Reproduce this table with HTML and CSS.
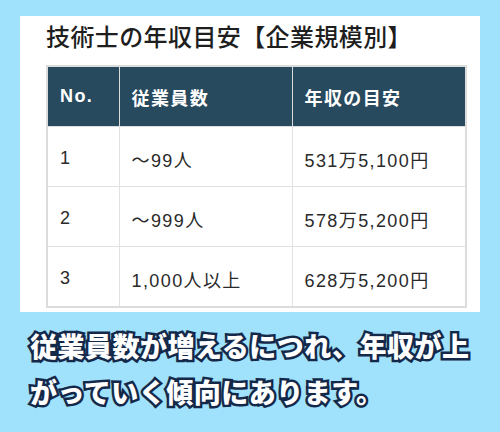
FILE: index.html
```html
<!DOCTYPE html>
<html lang="ja">
<head>
<meta charset="utf-8">
<link rel="stylesheet" href="styles.css">
</head>
<body>
<div class="panel">
  <h1 class="title">技術士の年収目安【企業規模別】</h1>
  <table class="tbl">
    <colgroup>
      <col class="c1"><col class="c2"><col class="c3">
    </colgroup>
    <thead>
      <tr><th>No.</th><th>従業員数</th><th>年収の目安</th></tr>
    </thead>
    <tbody>
      <tr><td>1</td><td>～99人</td><td>531万5,100円</td></tr>
      <tr><td>2</td><td>～999人</td><td>578万5,200円</td></tr>
      <tr><td>3</td><td>1,000人以上</td><td>628万5,200円</td></tr>
    </tbody>
  </table>
</div>
<p class="caption">従業員数が増えるにつれ、年収が上<br>がっていく傾向にあります。</p>
</body>
</html>
```
FILE: styles.css
```css
html, body {
  margin: 0;
  padding: 0;
}
body {
  width: 500px;
  height: 432px;
  background: #a0e1fb;
  overflow: hidden;
  font-family: "Liberation Sans", "Noto Sans CJK JP", sans-serif;
}
.panel {
  margin: 16px 0 0 20px;
  width: 460px;
  height: 296px;
  box-sizing: border-box;
  background: #ffffff;
  padding: 0 15px 0 26px;
}
.title {
  margin: 0;
  height: 49px;
  line-height: 39px;
  font-size: 24px;
  font-weight: 500;
  letter-spacing: 0.4px;
  color: #1e1e1e;
  font-family: "Noto Sans CJK JP", sans-serif;
  white-space: nowrap;
}
.tbl {
  border-collapse: collapse;
  width: 419px;
  table-layout: fixed;
  border: 2px solid #dcdcdc;
}
.c1 { width: 72px; }
.c2 { width: 173px; }
.c3 { width: 174px; }
.tbl th, .tbl td {
  height: 59px;
  padding: 0 0 0 12px;
  text-align: left;
  font-size: 18px;
  letter-spacing: 1.4px;
  border: 1px solid #e2e2e2;
  white-space: nowrap;
}
.tbl th {
  background: #284a5e;
  color: #fff;
  font-weight: 700;
  font-size: 18px;
  border-color: #dcdcdc;
}
.tbl td {
  color: #2a2a2a;
  height: 55px;
  padding-top: 4px;
}
.caption {
  margin: 11px 0 0 30px;
  font-family: "Noto Sans CJK JP", sans-serif;
  font-weight: 900;
  font-size: 27px;
  line-height: 46px;
  letter-spacing: 0.5px;
  color: #fff;
  -webkit-text-stroke: 5px #14294a;
  paint-order: stroke fill;
  white-space: nowrap;
}
```
